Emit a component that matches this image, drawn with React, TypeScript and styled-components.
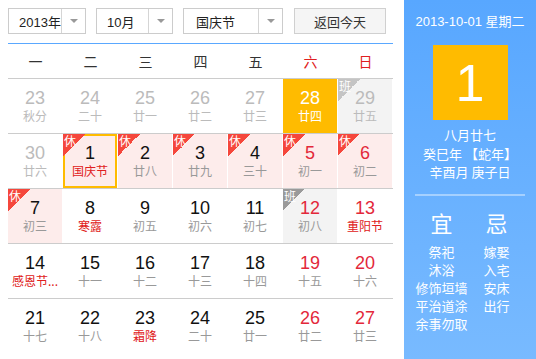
import styled, { createGlobalStyle, css } from 'styled-components';

const GlobalStyle = createGlobalStyle`
  body {
    margin: 0;
    background: #fff;
    font-family: "Liberation Sans", "Noto Sans CJK SC", sans-serif;
  }
`;

type Tone = 'normal' | 'holiday' | 'work' | 'today';

interface DayData {
  day: number;
  lunar: string;
  other?: boolean;
  weekend?: boolean;
  festival?: boolean;
  tone?: Tone;
  selected?: boolean;
}

const weeks: DayData[][] = [
  [
    { day: 23, lunar: '秋分', other: true },
    { day: 24, lunar: '二十', other: true },
    { day: 25, lunar: '廿一', other: true },
    { day: 26, lunar: '廿二', other: true },
    { day: 27, lunar: '廿三', other: true },
    { day: 28, lunar: '廿四', other: true, tone: 'today' },
    { day: 29, lunar: '廿五', other: true, tone: 'work' }
  ],
  [
    { day: 30, lunar: '廿六', other: true },
    { day: 1, lunar: '国庆节', festival: true, tone: 'holiday', selected: true },
    { day: 2, lunar: '廿八', tone: 'holiday' },
    { day: 3, lunar: '廿九', tone: 'holiday' },
    { day: 4, lunar: '三十', tone: 'holiday' },
    { day: 5, lunar: '初一', weekend: true, tone: 'holiday' },
    { day: 6, lunar: '初二', weekend: true, tone: 'holiday' }
  ],
  [
    { day: 7, lunar: '初三', tone: 'holiday' },
    { day: 8, lunar: '寒露', festival: true },
    { day: 9, lunar: '初五' },
    { day: 10, lunar: '初六' },
    { day: 11, lunar: '初七' },
    { day: 12, lunar: '初八', weekend: true, tone: 'work' },
    { day: 13, lunar: '重阳节', weekend: true, festival: true }
  ],
  [
    { day: 14, lunar: '感恩节...', festival: true },
    { day: 15, lunar: '十一' },
    { day: 16, lunar: '十二' },
    { day: 17, lunar: '十三' },
    { day: 18, lunar: '十四' },
    { day: 19, lunar: '十五', weekend: true },
    { day: 20, lunar: '十六', weekend: true }
  ],
  [
    { day: 21, lunar: '十七' },
    { day: 22, lunar: '十八' },
    { day: 23, lunar: '霜降', festival: true },
    { day: 24, lunar: '二十' },
    { day: 25, lunar: '廿一' },
    { day: 26, lunar: '廿二', weekend: true },
    { day: 27, lunar: '廿三', weekend: true }
  ]
];

const weekdays = ['一', '二', '三', '四', '五', '六', '日'];

const yi = ['祭祀', '沐浴', '修饰垣墙', '平治道涂', '余事勿取'];
const ji = ['嫁娶', '入宅', '安床', '出行'];

const App = () => {
  return (
    <Page>
      <GlobalStyle />
      <Main>
        <Toolbar>
          <SelectBox $width={78}>
            <SelectLabel>2013年</SelectLabel>
            <SelectArrow />
          </SelectBox>
          <SelectBox $width={77}>
            <SelectLabel>10月</SelectLabel>
            <SelectArrow />
          </SelectBox>
          <SelectBox $width={100}>
            <SelectLabel $pad={12}>国庆节</SelectLabel>
            <SelectArrow />
          </SelectBox>
          <TodayButton>返回今天</TodayButton>
        </Toolbar>
        <Calendar>
          <WeekHeader>
            {weekdays.map((w, i) => (
              <WeekName key={w} $weekend={i >= 5}>
                {w}
              </WeekName>
            ))}
          </WeekHeader>
          {weeks.map((week, wi) => (
            <WeekRow key={wi} $last={wi === weeks.length - 1}>
              {week.map((d) => {
                const tone = d.tone || 'normal';
                const sel = !!d.selected;
                return (
                  <DayCell key={`${wi}-${d.day}`} $tone={tone} $selected={sel}>
                    {tone === 'holiday' && (
                      <Badge $kind="rest" $offset={sel}>
                        休
                      </Badge>
                    )}
                    {tone === 'work' && (
                      <Badge $kind={d.other ? 'workFaded' : 'work'} $offset={sel}>
                        班
                      </Badge>
                    )}
                    <DayNumber
                      $tone={tone}
                      $other={!!d.other}
                      $weekend={!!d.weekend}
                    >
                      {d.day}
                    </DayNumber>
                    <LunarText
                      $tone={tone}
                      $other={!!d.other}
                      $festival={!!d.festival}
                    >
                      {d.lunar}
                    </LunarText>
                  </DayCell>
                );
              })}
            </WeekRow>
          ))}
        </Calendar>
      </Main>
      <Side>
        <SideDate>2013-10-01 星期二</SideDate>
        <BigDay>1</BigDay>
        <LunarInfo>
          <div>八月廿七</div>
          <div>癸巳年 【蛇年】</div>
          <div>辛酉月 庚子日</div>
        </LunarInfo>
        <Divider />
        <Almanac>
          <AlmanacColumn>
            <AlmanacTitle>宜</AlmanacTitle>
            {yi.map((t) => (
              <AlmanacItem key={t}>{t}</AlmanacItem>
            ))}
          </AlmanacColumn>
          <AlmanacColumn>
            <AlmanacTitle>忌</AlmanacTitle>
            {ji.map((t) => (
              <AlmanacItem key={t}>{t}</AlmanacItem>
            ))}
          </AlmanacColumn>
        </Almanac>
      </Side>
    </Page>
  );
};

const Page = styled.div`
  display: flex;
  width: 536px;
  height: 359px;
  overflow: hidden;
`;

const Main = styled.div`
  width: 385px;
  padding: 8px 0 0 8px;
`;

const Toolbar = styled.div`
  display: flex;
  gap: 10px;
  height: 26px;
`;

const SelectBox = styled.div<{ $width: number }>`
  display: flex;
  width: ${(p) => p.$width}px;
  height: 26px;
  box-sizing: border-box;
  border: 1px solid #cccccc;
  background: #fff;
  font-size: 13px;
  color: #222;
`;

const SelectLabel = styled.div<{ $pad?: number }>`
  flex: 1;
  display: flex;
  align-items: center;
  padding-left: ${(p) => p.$pad ?? 10}px;
  font-family: "Liberation Sans", "Noto Sans CJK SC", sans-serif;
`;

const SelectArrow = styled.div`
  width: 23px;
  border-left: 1px solid #d5d5d5;
  display: flex;
  align-items: center;
  justify-content: center;

  &::after {
    content: '';
    border-left: 4px solid transparent;
    border-right: 4px solid transparent;
    border-top: 4px solid #999;
  }
`;

const TodayButton = styled.button`
  width: 92px;
  height: 26px;
  margin-left: 1px;
  box-sizing: border-box;
  border: 1px solid #d0d0d0;
  background: #f5f5f5;
  color: #333;
  font-size: 13px;
  font-family: "Noto Sans CJK SC", sans-serif;
  padding: 0;
`;

const Calendar = styled.div`
  margin-top: 9px;
  border-top: 1px solid #5aa8ff;
`;

const WeekHeader = styled.div`
  display: grid;
  grid-template-columns: repeat(7, 55px);
  height: 34px;
  border-bottom: 1px solid #cccccc;
`;

const WeekName = styled.div<{ $weekend: boolean }>`
  display: flex;
  align-items: center;
  justify-content: center;
  font-size: 14px;
  color: ${(p) => (p.$weekend ? '#e02020' : '#333')};
  font-family: "Noto Sans CJK SC", sans-serif;
`;

const WeekRow = styled.div<{ $last: boolean }>`
  display: grid;
  grid-template-columns: repeat(7, 54px);
  column-gap: 1px;
  height: 54px;
  border-bottom: ${(p) => (p.$last ? 'none' : '1px solid #cccccc')};
`;

const toneBg: Record<Tone, string> = {
  normal: 'transparent',
  holiday: '#fdeceb',
  work: '#f3f3f3',
  today: '#ffbb00'
};

const DayCell = styled.div<{ $tone: Tone; $selected: boolean }>`
  position: relative;
  display: flex;
  flex-direction: column;
  align-items: center;
  box-sizing: border-box;
  padding-top: 9px;
  background: ${(p) => toneBg[p.$tone]};
  ${(p) =>
    p.$selected &&
    css`
      border: 2px solid #ffbb00;
      padding-top: 7px;
    `}
`;

const badgeColor = {
  rest: '#f5473c',
  work: '#9a9a9a',
  workFaded: '#c4c4c4'
};

const Badge = styled.span<{ $kind: keyof typeof badgeColor; $offset: boolean }>`
  position: absolute;
  top: ${(p) => (p.$offset ? -2 : 0)}px;
  left: ${(p) => (p.$offset ? -2 : 0)}px;
  width: 22px;
  height: 22px;
  padding: 0 0 0 1px;
  box-sizing: border-box;
  background: linear-gradient(
    135deg,
    ${(p) => badgeColor[p.$kind]} 50%,
    transparent 50%
  );
  color: #fff;
  font-size: 12px;
  line-height: 13px;
  font-family: "Noto Sans CJK SC", sans-serif;
`;

const DayNumber = styled.div<{ $tone: Tone; $other: boolean; $weekend: boolean }>`
  font-size: 18px;
  line-height: 20px;
  color: ${(p) =>
    p.$tone === 'today'
      ? '#fff'
      : p.$other
        ? '#bbbbbb'
        : p.$weekend
          ? '#e3283a'
          : '#111'};
`;

const LunarText = styled.div<{ $tone: Tone; $other: boolean; $festival: boolean }>`
  font-size: 12px;
  line-height: 16px;
  white-space: nowrap;
  font-family: "Noto Sans CJK SC", sans-serif;
  color: ${(p) =>
    p.$tone === 'today'
      ? '#fff'
      : p.$other
        ? '#bbbbbb'
        : p.$festival
          ? '#e02020'
          : '#999'};
`;

const Side = styled.div`
  margin-left: 11px;
  width: 132px;
  background: linear-gradient(180deg, #58a7ff 0%, #78baff 100%);
  color: #fff;
  display: flex;
  flex-direction: column;
  align-items: center;
  font-family: "Noto Sans CJK SC", sans-serif;
`;

const SideDate = styled.div`
  margin-top: 13px;
  font-size: 13px;
  line-height: 18px;
  font-family: "Liberation Sans", "Noto Sans CJK SC", sans-serif;
`;

const BigDay = styled.div`
  margin-top: 14px;
  width: 75px;
  height: 75px;
  background: #ffbb00;
  display: flex;
  align-items: center;
  justify-content: center;
  font-size: 52px;
  font-family: "Liberation Sans", sans-serif;
`;

const LunarInfo = styled.div`
  margin-top: 6px;
  font-size: 13px;
  line-height: 18.5px;
  text-align: center;
`;

const Divider = styled.div`
  margin-top: 12px;
  width: 110px;
  height: 2px;
  background: rgba(255, 255, 255, 0.4);
`;

const Almanac = styled.div`
  display: flex;
  align-self: flex-start;
  margin-left: 10px;
  margin-top: 12px;
`;

const AlmanacColumn = styled.div`
  width: 55px;
  display: flex;
  flex-direction: column;
  align-items: center;
`;

const AlmanacTitle = styled.div`
  font-size: 22px;
  line-height: 28px;
  margin-bottom: 7px;
`;

const AlmanacItem = styled.div`
  font-size: 13px;
  line-height: 18px;
  white-space: nowrap;
`;

export default App;
